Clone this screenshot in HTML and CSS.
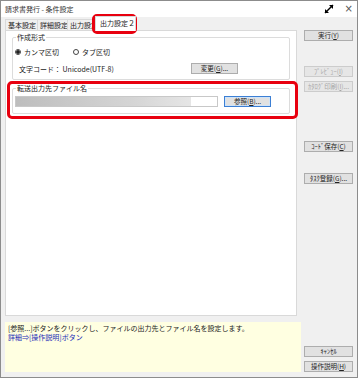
FILE: index.html
```html
<!DOCTYPE html>
<html lang="ja">
<head>
    <meta charset="UTF-8">
    <title>請求書発行 - 条件設定</title>
    <link rel="stylesheet" href="styles.css">
</head>
<body>
<div class="window">
    <div class="titlebar">
        <span class="title">請求書発行 - 条件設定</span>
        <span class="controls">
            <svg class="expand" width="12" height="12" viewBox="0 0 12 12">
                <path d="M2 10 L10 2" stroke="#000" stroke-width="1.4"/>
                <path d="M6 2 H10 V6 Z" fill="#000"/>
                <path d="M2 6 V10 H6 Z" fill="#000"/>
            </svg>
            <span class="close">&times;</span>
        </span>
    </div>

    <div class="body">
        <div class="main">
            <div class="tabs">
                <span class="tab t1">基本設定</span>
                <span class="tab t2">詳細設定</span>
                <span class="tab t3">出力設定</span>
                <span class="tab active">出力設定２</span>
            </div>

            <div class="panel">
                <div class="group">
                    <span class="legend">作成形式</span>
                    <div class="radios">
                        <span class="radio"><span class="dot on"></span>カンマ区切</span>
                        <span class="radio"><span class="dot"></span>タブ区切</span>
                    </div>
                    <div class="code-row">
                        <span class="code">文字コード： Unicode(UTF-8)</span>
                        <span class="btn">変更(<u>G</u>)...</span>
                    </div>
                </div>

                <div class="group dest">
                    <span class="legend">転送出力先ファイル名</span>
                    <div class="file-row">
                        <span class="input"></span>
                        <span class="btn focus">参照(<u>B</u>)...</span>
                    </div>
                </div>
            </div>

            <div class="hint">
                <p>[参照...]ボタンをクリックし、ファイルの出力先とファイル名を設定します。</p>
                <p class="link">詳細⇒[操作説明]ボタン</p>
            </div>
        </div>

        <div class="side">
            <span class="btn">実行(<u>Y</u>)</span>
            <span class="btn off gap1">ﾌﾟﾚﾋﾞｭｰ(<u>I</u>)</span>
            <span class="btn off">ｶﾀﾛｸﾞ印刷(<u>I</u>)...</span>
            <span class="btn gap2">ｺｰﾄﾞ保存(<u>C</u>)</span>
            <span class="btn gap3">ﾀｽｸ登録(<u>G</u>)...</span>
            <span class="spacer"></span>
            <span class="btn">ｷｬﾝｾﾙ</span>
            <span class="btn">操作説明(<u>H</u>)</span>
        </div>
    </div>

    <!-- annotation frames -->
    <span class="mark mark-tab"></span>
    <span class="mark mark-dest"></span>
</div>
</body>
</html>
```

FILE: styles.css
```css
/* General Styles */
body {
    margin: 0;
    background: #fff;
    font-family: "Noto Sans CJK JP", "Noto Sans", sans-serif;
    font-size: 7px;
    color: #222;
}

.window {
    position: relative;
    width: 356px;
    height: 376px;
    border: 1px solid #8c8c8c;
    background: #f0f0f0;
    display: flex;
    flex-direction: column;
}

/* Title bar */
.titlebar {
    height: 16px;
    background: #fff;
    display: flex;
    align-items: center;
    justify-content: space-between;
    padding: 0 4px 0 4px;
}

.title {
    font-size: 7px;
    color: #333;
}

.controls {
    display: flex;
    align-items: center;
    gap: 10px;
}

.close {
    font-family: "DejaVu Sans", sans-serif;
    font-size: 10px;
    color: #555;
    line-height: 1;
}

/* Body */
.body {
    flex: 1;
    display: flex;
}

.main {
    width: 296px;
    padding-left: 4px;
    display: flex;
    flex-direction: column;
}

/* Tabs */
.tabs {
    display: flex;
    align-items: flex-end;
    height: 14px;
}

.tab {
    height: 11px;
    line-height: 11px;
    border: 1px solid #d9d9d9;
    border-bottom: none;
    margin-right: -1px;
    background: #f0f0f0;
    white-space: nowrap;
    overflow: hidden;
    box-sizing: content-box;
    padding-left: 2px;
}

.t1 { width: 29px; }
.t2 { width: 27px; }
.t3 { width: 27px; }

.tab.active {
    width: 34px;
    height: 14px;
    line-height: 13px;
    background: #fff;
    padding: 0 1px 0 4px;
    margin-left: -2px;
    position: relative;
    z-index: 1;
}

/* Panel */
.panel {
    height: 284px;
    background: #fff;
    border: 1px solid #d9d9d9;
    margin-top: -1px;
    margin-right: 4px;
    padding: 0 6px;
}

.group {
    position: relative;
    border: 1px solid #dcdcdc;
    border-radius: 2px;
    padding: 8px 6px 5px 2px;
    margin-top: 6px;
}

.legend {
    position: absolute;
    top: -5px;
    left: 3px;
    padding: 0 1px;
    background: #fff;
    line-height: 9px;
}

.radios {
    display: flex;
    gap: 14px;
    height: 11px;
    align-items: center;
}

.radio {
    display: flex;
    align-items: center;
    gap: 3px;
}

.dot {
    width: 6px;
    height: 6px;
    border: 1px solid #444;
    border-radius: 50%;
    box-sizing: border-box;
    display: inline-block;
}

.dot.on {
    background: radial-gradient(circle, #222 0 1.5px, #fff 2px);
}

.code-row {
    display: flex;
    align-items: center;
    margin-top: 6px;
    height: 11px;
}

.code {
    margin-left: 4px;
    width: 172px;
}

.group.dest {
    margin-top: 8px;
    padding: 7px 6px 6px 2px;
}

.file-row {
    display: flex;
    align-items: center;
    gap: 6px;
}

.input {
    width: 201px;
    height: 9px;
    border: 1px solid #c8c8c8;
    background: linear-gradient(to right, #bdbdbd, #d6d6d6 60%, #e6e6e6 87%, #fff 87%);
}

/* Buttons */
.btn {
    display: block;
    height: 9px;
    line-height: 9px;
    width: 45px;
    text-align: center;
    background: #e1e1e1;
    border: 1px solid #adadad;
    white-space: nowrap;
    font-size: 6.5px;
    color: #222;
}

.btn.focus {
    border-color: #3c7fd4;
    box-shadow: inset 0 0 0 1px #cfe3f8;
}

.btn.off {
    color: #a6a6a6;
    border-color: #cccccc;
    background: #e6e6e6;
}

/* Hint */
.hint {
    margin-top: 6px;
    height: 50px;
    background: #ffffe1;
    padding: 2px 3px;
    box-sizing: border-box;
}

.hint p {
    margin: 0;
    line-height: 9px;
}

.hint .link {
    color: #1c2cb8;
}

/* Side column */
.side {
    width: 49px;
    margin-left: 3px;
    padding-top: 13px;
    padding-bottom: 5px;
    display: flex;
    flex-direction: column;
    gap: 4px;
}

.side .btn {
    width: 47px;
}

.side .gap1 {
    margin-top: 21px;
}

.side .gap2 {
    margin-top: 45px;
}

.side .gap3 {
    margin-top: 17px;
}

.spacer {
    flex: 1;
}

/* Red annotation frames */
.mark {
    position: absolute;
    border: 3px solid #e8000f;
    border-radius: 5px;
}

.mark-tab {
    left: 91px;
    top: 13px;
    width: 39px;
    height: 14px;
}

.mark-dest {
    left: 6px;
    top: 80px;
    width: 285px;
    height: 32px;
}
```
